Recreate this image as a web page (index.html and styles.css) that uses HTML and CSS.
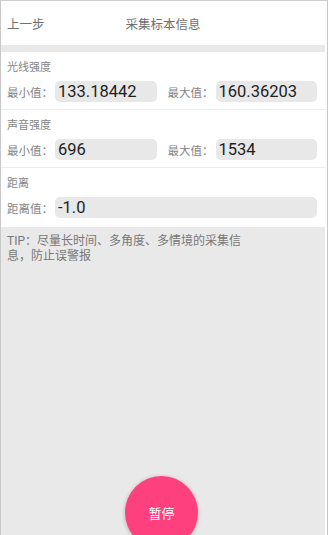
FILE: index.html
```html
<!DOCTYPE html>
<html lang="zh">
<head>
  <meta charset="UTF-8" />
  <meta name="viewport" content="width=device-width, initial-scale=1.0" />
  <title>采集标本信息</title>
  <link rel="stylesheet" href="styles.css">
</head>
<body>
  <div class="screen">
    <div class="top-bar">
      <span class="back">上一步</span>
      <span class="title">采集标本信息</span>
    </div>
    <div class="spacer"></div>

    <div class="section">
      <div class="section-title">光线强度</div>
      <div class="row">
        <div class="field">
          <span class="label">最小值：</span>
          <span class="value">133.18442</span>
        </div>
        <div class="field">
          <span class="label">最大值：</span>
          <span class="value">160.36203</span>
        </div>
      </div>
    </div>

    <div class="section">
      <div class="section-title">声音强度</div>
      <div class="row">
        <div class="field">
          <span class="label">最小值：</span>
          <span class="value">696</span>
        </div>
        <div class="field">
          <span class="label">最大值：</span>
          <span class="value">1534</span>
        </div>
      </div>
    </div>

    <div class="section last">
      <div class="section-title">距离</div>
      <div class="row">
        <div class="field">
          <span class="label">距离值：</span>
          <span class="value">-1.0</span>
        </div>
      </div>
    </div>

    <div class="tip-area">
      <p class="tip">TIP：尽量长时间、多角度、多情境的采集信息，防止误警报</p>
      <button class="fab">暂停</button>
    </div>
  </div>
</body>
</html>
```

FILE: styles.css
```css
* { box-sizing: border-box; }

body {
  margin: 0;
  background: #ffffff;
  font-family: Roboto, "Noto Sans CJK SC", sans-serif;
}

.screen {
  position: relative;
  width: 328px;
  height: 535px;
  border-left: 1px solid #c8c8c8;
  border-top: 1px solid #d0d0d0;
  border-right: 1px solid #c8c8c8;
  padding-right: 2px;
  display: flex;
  flex-direction: column;
  overflow: hidden;
}

.top-bar {
  position: relative;
  height: 44px;
  display: flex;
  align-items: center;
  padding-left: 6px;
  color: #6e6e6e;
  font-size: 12.5px;
}

.top-bar .title {
  position: absolute;
  left: 0;
  right: 0;
  text-align: center;
  pointer-events: none;
}

.spacer {
  height: 7px;
  background: #e9e9e9;
}

.section {
  padding: 8px 8px 7px 6px;
  border-bottom: 1px solid #ececec;
}

.section.last {
  border-bottom: none;
  padding-bottom: 9px;
}

.section-title {
  font-size: 11px;
  line-height: 16px;
  color: #848484;
  margin-bottom: 5px;
}

.row {
  display: flex;
  gap: 11px;
}

.field {
  flex: 1;
  display: flex;
  align-items: center;
}

.label {
  width: 48px;
  font-size: 11.5px;
  color: #848484;
  white-space: nowrap;
}

.value {
  flex: 1;
  height: 21px;
  line-height: 21px;
  padding-left: 3px;
  background: #e8e8e8;
  border-radius: 5px;
  font-size: 16.5px;
  color: #1e1e1e;
}

.tip-area {
  position: relative;
  flex: 1;
  background: #e9e9e9;
  padding: 7px 6px;
}

.tip {
  margin: 0;
  max-width: 242px;
  font-size: 12px;
  line-height: 15px;
  color: #777777;
}

.fab {
  position: absolute;
  left: 124px;
  bottom: -14px;
  width: 73px;
  height: 73px;
  border: none;
  border-radius: 50%;
  background: #ff407e;
  color: #ffffff;
  font-family: "Noto Sans CJK SC", sans-serif;
  font-size: 13px;
  box-shadow: 0 1px 4px rgba(0, 0, 0, 0.25);
}
```
